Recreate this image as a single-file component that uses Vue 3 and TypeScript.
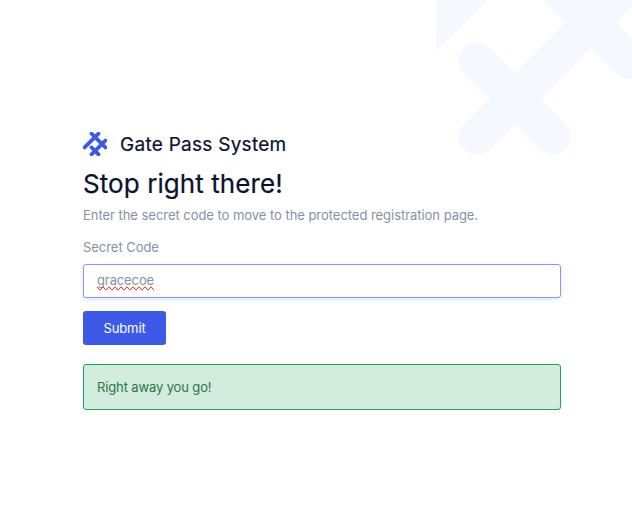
<script setup lang="ts">
import { ref } from 'vue'

const code = ref<string>('gracecoe')
const message = ref<string>('Right away you go!')
</script>

<template>
  <main class="page">
    <svg class="backdrop" viewBox="53 109.5 196 155" aria-hidden="true">
      <path d="M18 170L170 18M94 18L246 170M94 170L170 246M94 246L246 94" />
    </svg>
    <section class="panel">
      <header class="brand">
        <svg class="logo" viewBox="0 0 264 264" aria-hidden="true">
          <path d="M18 170L170 18M94 18L246 170M94 170L170 246M94 246L246 94" />
        </svg>
        <span class="name">Gate Pass System</span>
      </header>
      <h1 class="title">Stop right there!</h1>
      <p class="lead">Enter the secret code to move to the protected registration page.</p>
      <form @submit.prevent>
        <label class="label">Secret Code</label>
        <div class="field" role="textbox"><span class="typed">{{ code }}</span></div>
        <button class="submit" type="submit">Submit</button>
      </form>
      <div class="alert" role="status">{{ message }}</div>
    </section>
  </main>
</template>

<style>
body {
  background: #fff;
}
</style>

<style scoped>
.page {
  position: relative;
  box-sizing: border-box;
  width: 632px;
  height: 531px;
  padding: 131px 71px 0 83px;
  overflow: hidden;
  font: 400 13px/20px Inter, "Liberation Sans", sans-serif;
  letter-spacing: -0.04px;
  color: #8492a6;
}
.backdrop {
  position: absolute;
  top: 0;
  right: 0;
  width: 196px;
  height: 155px;
}
path {
  fill: none;
  stroke: #f5f8ff;
  stroke-width: 36;
  stroke-linecap: round;
}
.panel {
  position: relative;
}
.brand {
  display: flex;
  align-items: center;
  gap: 13px;
  height: 26px;
}
.logo {
  width: 24px;
  height: 24px;
}
.logo path {
  stroke: #3c5ae6;
  stroke-width: 42;
}
.name {
  padding-top: 2px;
  font-size: 19px;
  letter-spacing: 0.27px;
  font-weight: 400;
  color: #0a112c;
  -webkit-text-stroke: 0.2px #0a112c;
}
.title {
  margin: 10px 0 0;
  font-size: 26px;
  line-height: 34px;
  font-weight: 400;
  letter-spacing: 0.08px;
  color: #0a112c;
  -webkit-text-stroke: 0.2px #0a112c;
}
.lead {
  margin: 4px 0 0;
}
.label {
  display: block;
  margin: 12px 0 7px;
}
.field {
  box-sizing: border-box;
  height: 34px;
  padding: 5px 13px;
  border: 1px solid #869bf0;
  border-radius: 3px;
  background: #fff;
  box-shadow: 0 2px 4px rgba(60, 90, 230, 0.15);
}
.typed {
  letter-spacing: -0.12px;
  text-decoration-line: spelling-error;
}
.submit {
  display: block;
  width: 83px;
  height: 34px;
  margin-top: 13px;
  padding: 0;
  border: 0;
  border-radius: 3px;
  background: #3c5ae6;
  color: #fff;
  font: 400 13px/20px Inter, "Liberation Sans", sans-serif;
  letter-spacing: -0.1px;
}
.alert {
  box-sizing: border-box;
  height: 46px;
  margin-top: 19px;
  padding: 12px 13px;
  border: 1px solid #21a35c;
  border-radius: 3px;
  background: #d2ecde;
  letter-spacing: -0.13px;
  color: #2e7446;
}
</style>
